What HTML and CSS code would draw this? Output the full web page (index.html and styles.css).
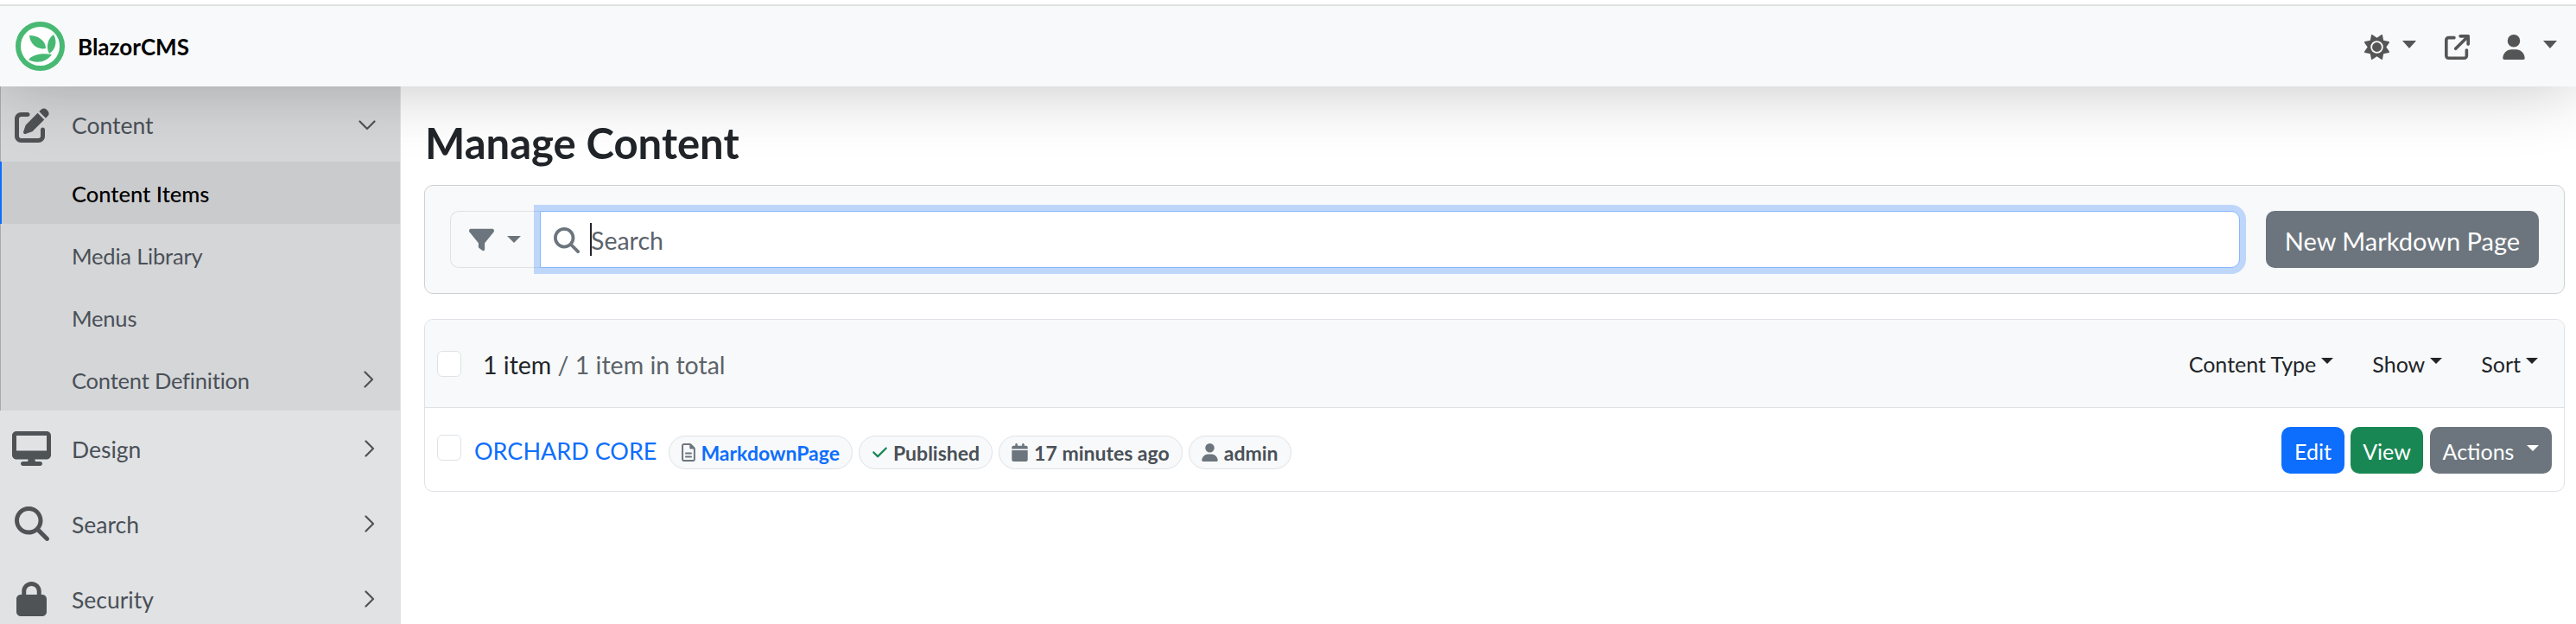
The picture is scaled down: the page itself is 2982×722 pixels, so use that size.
FILE: index.html
```html
<!DOCTYPE html>
<html lang="en">
<head>
<meta charset="utf-8">
<title>Manage Content - BlazorCMS</title>
<link rel="stylesheet" href="styles.css">
</head>
<body>
<div class="strip"></div>
<header class="navbar">
  <a class="brand">
    <svg class="logo" viewBox="0 0 57 57"><circle cx="28.5" cy="28.5" r="25.5" fill="#fff" stroke="#48b973" stroke-width="6"/><path fill="#48b973" d="M16 16C26 16 35 22 35 31 26 33 17 27 16 16zM44 15C49 23 46 33 39 37 35 29 37 20 44 15zM15 44C20 38 30 36 42 38 36 47 24 49 15 44z"/></svg>
    <span class="brand-name">BlazorCMS</span>
  </a>
  <div class="nav-tools">
    <span class="tool tool-theme"><svg class="ti" viewBox="0 0 512 512"><path d="M361.5 1.2c5 2.1 8.6 6.6 9.6 11.9L391 121l107.9 19.8c5.3 1 9.8 4.6 11.9 9.6s1.5 10.7-1.6 15.2L446.9 256l62.3 90.3c3.1 4.5 3.7 10.2 1.6 15.2s-6.6 8.6-11.9 9.6L391 391 371.1 498.9c-1 5.3-4.6 9.8-9.6 11.9s-10.7 1.5-15.2-1.6L256 446.9l-90.3 62.3c-4.5 3.1-10.2 3.7-15.2 1.6s-8.6-6.6-9.6-11.9L121 391 13.1 371.1c-5.3-1-9.8-4.6-11.9-9.6s-1.5-10.7 1.6-15.2L65.1 256 2.8 165.7c-3.1-4.5-3.7-10.2-1.6-15.2s6.6-8.6 11.9-9.6L121 121 140.9 13.1c1-5.3 4.6-9.8 9.6-11.9s10.7-1.5 15.2 1.6L256 65.1 346.3 2.8c4.5-3.1 10.2-3.7 15.2-1.6zM160 256a96 96 0 1 1 192 0 96 96 0 1 1 -192 0zm224 0a128 128 0 1 0 -256 0 128 128 0 1 0 256 0z"/></svg><i class="caret caret-nav"></i></span>
    <span class="tool tool-link"><svg class="ti" viewBox="0 0 512 512"><path d="M320 0c-17.7 0-32 14.3-32 32s14.3 32 32 32h82.7L201.4 265.4c-12.5 12.5-12.5 32.8 0 45.3s32.8 12.5 45.3 0L448 109.3V192c0 17.7 14.3 32 32 32s32-14.3 32-32V32c0-17.7-14.3-32-32-32H320zM80 32C35.8 32 0 67.8 0 112V432c0 44.2 35.8 80 80 80H400c44.2 0 80-35.8 80-80V320c0-17.7-14.3-32-32-32s-32 14.3-32 32V432c0 8.8-7.2 16-16 16H80c-8.8 0-16-7.2-16-16V112c0-8.8 7.2-16 16-16H192c17.7 0 32-14.3 32-32s-14.3-32-32-32H80z"/></svg></span>
    <span class="tool tool-user"><svg class="ti" viewBox="0 0 448 512"><path d="M224 256A128 128 0 1 0 224 0a128 128 0 1 0 0 256zm-45.7 48C79.8 304 0 383.8 0 482.3C0 498.7 13.3 512 29.7 512H418.3c16.4 0 29.7-13.3 29.7-29.7C448 383.8 368.2 304 269.7 304H178.3z"/></svg><i class="caret caret-nav"></i></span>
  </div>
</header>
<div class="layout">
  <nav class="sidebar">
    <div class="group">
      <div class="menu-row menu-row-open">
        <span class="menu-icon"><svg class="mi-pen" viewBox="0 0 512 512"><path d="M471.6 21.7c-21.9-21.9-57.3-21.9-79.2 0L362.3 51.7l97.9 97.9 30.1-30.1c21.9-21.9 21.9-57.3 0-79.2L471.6 21.7zm-299.2 220c-6.1 6.1-10.8 13.6-13.5 21.9l-29.6 88.8c-2.9 8.6-.6 18.1 5.8 24.6s15.9 8.7 24.6 5.8l88.8-29.6c8.2-2.7 15.7-7.4 21.9-13.5L437.7 172.3 339.7 74.3 172.4 241.7zM96 64C43 64 0 107 0 160V416c0 53 43 96 96 96H352c53 0 96-43 96-96V320c0-17.7-14.3-32-32-32s-32 14.3-32 32v96c0 17.7-14.3 32-32 32H96c-17.7 0-32-14.3-32-32V160c0-17.7 14.3-32 32-32h96c17.7 0 32-14.3 32-32s-14.3-32-32-32H96z"/></svg></span>
        <span class="menu-label">Content</span>
        <svg class="chev chev-down" viewBox="0 0 20 12"><path d="M1.5 1.5 10 10l8.500-8.500"/></svg>
      </div>
      <ul class="submenu">
        <li class="sub active">Content Items</li>
        <li class="sub">Media Library</li>
        <li class="sub">Menus</li>
        <li class="sub has-next">Content Definition<svg class="chev chev-right" viewBox="0 0 12 20"><path d="M1.500 1.500 10 10l-8.500 8.500"/></svg></li>
      </ul>
    </div>
    <div class="menu-row">
      <span class="menu-icon"><svg class="mi-desktop" viewBox="0 0 576 512"><path d="M64 0C28.700 0 0 28.700 0 64V352c0 35.300 28.700 64 64 64H240l-10.700 32H160c-17.700 0-32 14.300-32 32s14.300 32 32 32H416c17.700 0 32-14.300 32-32s-14.300-32-32-32H346.700L336 416H512c35.300 0 64-28.700 64-64V64c0-35.300-28.700-64-64-64H64zM512 64V288H64V64H512z"/></svg></span>
      <span class="menu-label">Design</span>
      <svg class="chev chev-right" viewBox="0 0 12 20"><path d="M1.500 1.500 10 10l-8.500 8.500"/></svg>
    </div>
    <div class="menu-row">
      <span class="menu-icon"><svg class="mi-search" viewBox="0 0 512 512"><path d="M416 208c0 45.900-14.900 88.300-40 122.700L502.600 457.400c12.500 12.500 12.500 32.800 0 45.300s-32.800 12.500-45.300 0L330.700 376c-34.400 25.200-76.800 40-122.700 40C93.100 416 0 322.900 0 208S93.100 0 208 0S416 93.100 416 208zM208 352a144 144 0 1 0 0-288 144 144 0 1 0 0 288z"/></svg></span>
      <span class="menu-label">Search</span>
      <svg class="chev chev-right" viewBox="0 0 12 20"><path d="M1.500 1.500 10 10l-8.500 8.500"/></svg>
    </div>
    <div class="menu-row">
      <span class="menu-icon"><svg class="mi-lock" viewBox="0 0 448 512"><path d="M144 144v48H304V144c0-44.200-35.800-80-80-80s-80 35.800-80 80zM80 192V144C80 64.500 144.500 0 224 0s144 64.500 144 144v48h16c35.300 0 64 28.700 64 64V448c0 35.300-28.700 64-64 64H64c-35.300 0-64-28.700-64-64V256c0-35.300 28.700-64 64-64H80z"/></svg></span>
      <span class="menu-label">Security</span>
      <svg class="chev chev-right" viewBox="0 0 12 20"><path d="M1.500 1.500 10 10l-8.500 8.500"/></svg>
    </div>
  </nav>
  <main class="main">
    <h1 class="title">Manage Content</h1>
    <section class="search-card">
      <div class="search-group">
        <span class="filter-btn"><svg class="filter-icon" viewBox="0 0 512 512"><path d="M3.900 54.900C10.500 40.900 24.500 32 40 32H472c15.500 0 29.500 8.900 36.100 22.900s4.600 30.500-5.200 42.500L320 320.900V448c0 12.100-6.800 23.200-17.700 28.600s-23.800 4.300-33.500-3l-64-48c-8.100-6-12.800-15.500-12.800-25.600V320.900L9 97.300C-.7 85.400-2.800 68.800 3.900 54.900z"/></svg><i class="caret caret-filter"></i></span>
        <div class="search-input">
          <svg class="search-icon" viewBox="0 0 512 512"><path d="M416 208c0 45.900-14.900 88.300-40 122.700L502.600 457.400c12.500 12.500 12.500 32.800 0 45.300s-32.800 12.500-45.300 0L330.700 376c-34.400 25.200-76.800 40-122.700 40C93.100 416 0 322.900 0 208S93.100 0 208 0S416 93.100 416 208zM208 352a144 144 0 1 0 0-288 144 144 0 1 0 0 288z"/></svg>
          <i class="text-caret"></i><span class="placeholder">Search</span>
        </div>
      </div>
      <a class="btn btn-new">New Markdown Page</a>
    </section>
    <section class="list-card">
      <div class="list-head">
        <span class="check"></span>
        <span class="count"><b class="count-now">1 item</b> / 1 item in total</span>
        <div class="list-filters">
          <span class="lf lf-type">Content Type<i class="caret caret-dark"></i></span>
          <span class="lf lf-show">Show<i class="caret caret-dark"></i></span>
          <span class="lf lf-sort">Sort<i class="caret caret-dark"></i></span>
        </div>
      </div>
      <div class="list-row">
        <span class="check"></span>
        <a class="item-title">ORCHARD CORE</a>
        <span class="chip chip-type"><svg class="ci ci-file" viewBox="0 0 384 512"><path d="M64 464c-8.800 0-16-7.200-16-16V64c0-8.800 7.200-16 16-16H224v80c0 17.700 14.300 32 32 32h80V448c0 8.800-7.200 16-16 16H64zM64 0C28.700 0 0 28.700 0 64V448c0 35.300 28.700 64 64 64H320c35.300 0 64-28.700 64-64V154.500c0-17-6.700-33.300-18.700-45.300L274.700 18.700C262.700 6.700 246.500 0 229.500 0H64zm56 256c-13.300 0-24 10.700-24 24s10.700 24 24 24H264c13.300 0 24-10.700 24-24s-10.700-24-24-24H120zm0 96c-13.300 0-24 10.700-24 24s10.700 24 24 24H264c13.300 0 24-10.700 24-24s-10.700-24-24-24H120z"/></svg>MarkdownPage</span>
        <span class="chip"><svg class="ci ci-check" viewBox="0 0 512 512"><path d="M470.600 105.400c12.500 12.500 12.500 32.800 0 45.300l-256 256c-12.500 12.500-32.800 12.500-45.300 0l-128-128c-12.500-12.500-12.500-32.800 0-45.300s32.800-12.500 45.300 0L192 338.700 425.400 105.400c12.500-12.500 32.800-12.500 45.300 0z"/></svg>Published</span>
        <span class="chip"><svg class="ci" viewBox="0 0 448 512"><path d="M96 32V64H48C21.500 64 0 85.500 0 112v48H448V112c0-26.500-21.500-48-48-48H352V32c0-17.700-14.300-32-32-32s-32 14.300-32 32V64H160V32c0-17.700-14.300-32-32-32S96 14.300 96 32zM448 192H0V464c0 26.500 21.500 48 48 48H400c26.500 0 48-21.500 48-48V192z"/></svg>17 minutes ago</span>
        <span class="chip"><svg class="ci" viewBox="0 0 448 512"><path d="M224 256A128 128 0 1 0 224 0a128 128 0 1 0 0 256zm-45.700 48C79.800 304 0 383.800 0 482.300C0 498.700 13.300 512 29.700 512H418.300c16.400 0 29.700-13.300 29.700-29.700C448 383.800 368.200 304 269.700 304H178.300z"/></svg>admin</span>
        <div class="row-actions">
          <a class="btn btn-sm btn-edit">Edit</a>
          <a class="btn btn-sm btn-view">View</a>
          <a class="btn btn-sm btn-actions">Actions<i class="caret caret-white"></i></a>
        </div>
      </div>
    </section>
  </main>
</div>
</body>
</html>
```

FILE: styles.css
```css
* { box-sizing: border-box; }
html, body { margin: 0; padding: 0; height: 722px; overflow: hidden; background: #fff; }
body { font-family: Lato, "Noto Sans", sans-serif; font-size: 26.5px; color: #212529; }
a { text-decoration: none; }
svg { display: block; fill: currentColor; flex: none; }

.strip { height: 7px; background: #fff; border-bottom: 2px solid #dfe1de; position: relative; z-index: 3; }

.navbar { height: 93px; background: #f8f9fa; display: flex; align-items: center; justify-content: space-between; position: relative; z-index: 2; box-shadow: 0 0 80px rgba(0,0,0,.24); }
.brand { display: flex; align-items: center; margin-left: 18px; }
.logo { width: 57px; height: 57px; }
.brand-name { margin-left: 15px; font-size: 26px; font-weight: 700; color: #000; }

.nav-tools { display: flex; align-items: center; color: #555; margin: 2px 22px 0 0; }
.tool { display: flex; align-items: center; }
.ti { width: 29px; height: 29px; }
.tool-user .ti { width: 26px; }
.tool-link { margin-left: 33px; }
.tool-user { margin-left: 38px; }
.caret { display: block; width: 0; height: 0; border-style: solid; border-color: currentColor transparent transparent; flex: none; }
.caret-nav { border-width: 9px 8px 0; margin-left: 15px; margin-top: -6px; }
.tool-user .caret-nav { margin-left: 21px; }

.layout { display: flex; height: 622px; }
.sidebar { width: 464px; flex: none; background: #e1e2e4; color: #495057; }
.group { background: #d5d6d8; border-left: 1px solid #a9aaac; margin-right: 1px; }
.menu-row { height: 87px; display: flex; align-items: center; padding-right: 28px; }
.group .menu-row { margin-left: -1px; }
.menu-icon { width: 73px; margin-right: 10px; display: flex; justify-content: center; color: #505356; flex: none; }
.mi-pen { width: 40px; height: 40px; margin-top: 3px; }
.mi-desktop { width: 45px; height: 40px; }
.mi-search { width: 40px; height: 40px; }
.mi-lock { width: 35px; height: 40px; }
.menu-label { flex: 1; padding-top: 2px; }
.chev { fill: none; stroke: #505356; stroke-width: 2.2; stroke-linecap: round; stroke-linejoin: round; }
.chev-down { width: 20px; height: 12px; margin-top: 2px; }
.chev-right { width: 12px; height: 20px; margin-right: 2px; }

.submenu { list-style: none; margin: 0; padding: 0; }
.sub { height: 72px; padding: 2px 28px 0 82px; display: flex; align-items: center; justify-content: space-between; font-size: 25.5px; letter-spacing: -.2px; }
.sub .chev { margin-top: -2px; }
.sub.active { background: #cacbcd; color: #000; font-weight: 500; letter-spacing: 0; margin-left: -1px; padding-left: 81px; border-left: 2px solid #0d6efd; }

.main { flex: 1; padding: 0 13px 0 27px; }
.title { margin: 0; height: 114px; display: flex; align-items: center; padding: 16px 0 0 1px; font-size: 49px; font-weight: 700; color: #212529; }

.search-card { height: 126px; border: 1px solid #cfd0d2; border-radius: 10px; background: #f8f9fa; padding: 29px; display: flex; gap: 30px; }
.search-group { flex: 1; display: flex; }
.filter-btn { width: 104px; display: flex; align-items: center; padding-left: 21px; border: 1px solid #dee2e6; border-right: 0; border-radius: 10px 0 0 10px; color: #6c757d; }
.filter-icon { width: 29px; height: 29px; }
.caret-filter { border-width: 8px 8px 0; margin-left: 15px; }
.search-input { flex: 1; display: flex; align-items: center; background: #fff; border: 1px solid #86b7fe; border-radius: 0 10px 10px 0; box-shadow: 0 0 0 7px rgba(13,110,253,.25); padding-left: 15px; color: #6c757d; }
.search-icon { width: 30px; height: 30px; margin-top: 2px; }
.text-caret { display: block; width: 2px; height: 38px; background: #212529; margin-left: 12px; flex: none; }
.placeholder { color: #5c636a; font-size: 28.5px; margin: 2px 0 0 -1px; }

.btn { display: flex; align-items: center; justify-content: center; color: #fff; border-radius: 10px; white-space: nowrap; padding-top: 2px; }
.btn-new { width: 316px; background: #6c757d; font-size: 29px; }

.list-card { margin-top: 29px; height: 200px; border: 1px solid #dee2e6; border-radius: 10px; overflow: hidden; }
.list-head { height: 102px; background: #f8f9fa; border-bottom: 1px solid #dee2e6; display: flex; align-items: center; padding: 0 30px 0 14px; }
.check { width: 28px; height: 30px; background: #fff; border: 1px solid #dee2e6; border-radius: 6px; flex: none; }
.count { margin-left: 25px; padding-top: 2px; color: #5c636a; font-size: 28.5px; }
.count-now { font-weight: 400; color: #212529; }
.list-filters { margin-left: auto; display: flex; align-items: center; gap: 45px; font-size: 25px; }
.lf { display: flex; align-items: center; color: #212529; }
.caret-dark { border-width: 7px 7px 0; margin-left: 6px; margin-top: -6px; }

.list-row { height: 97px; display: flex; align-items: center; padding: 0 14px; }
.list-row .check { margin-top: -6px; }
.item-title { margin-left: 15px; margin-right: 14px; color: #0d6efd; font-size: 27px; margin-top: 2px; }
.chip { display: flex; align-items: center; height: 39px; margin: 5px 7px 0 0; padding: 2px 14px 0; border: 1px solid #dee2e6; border-radius: 20px; background: #f8f9fa; font-size: 23px; font-weight: 700; color: #495057; }
.chip-type { color: #0d6efd; }
.ci { width: 19px; height: 21px; margin: -2px 7px 0 0; color: #6c757d; }
.ci-file { width: 16px; margin-right: 6px; }
.ci-check { color: #198754; margin-right: 6px; }
.row-actions { margin-left: auto; display: flex; gap: 7px; }
.btn-sm { height: 54px; font-size: 25px; }
.btn-edit { width: 73px; background: #0d6efd; }
.btn-view { width: 84px; background: #198754; }
.btn-actions { width: 141px; background: #6c757d; margin-left: 1px; }
.caret-white { border-width: 7px 7px 0; margin-left: 15px; margin-top: -6px; }
```
